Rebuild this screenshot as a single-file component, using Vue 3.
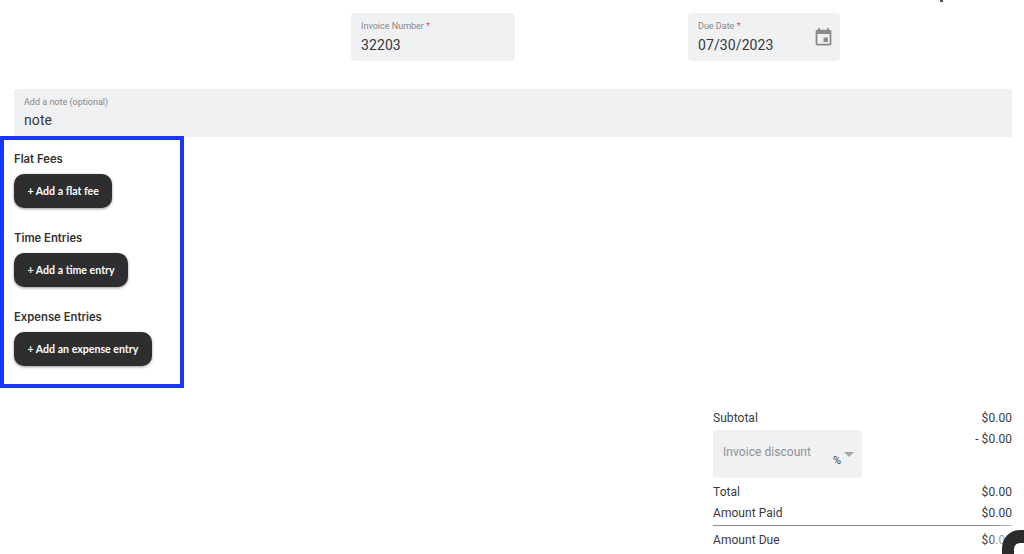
<script setup>
const sections = [
  { title: 'Flat Fees', action: '+ Add a flat fee' },
  { title: 'Time Entries', action: '+ Add a time entry' },
  { title: 'Expense Entries', action: '+ Add an expense entry' },
]
const totalsTop = [{ label: 'Total', value: '$0.00' }, { label: 'Amount Paid', value: '$0.00' }]
</script>

<template>
  <div class="page">
    <span class="clipped-mark"></span>
    <div class="top-row">
      <div class="field invoice">
        <div class="label">Invoice Number <span class="req">*</span></div>
        <div class="value">32203</div>
      </div>
      <div class="field due">
        <div>
          <div class="label">Due Date <span class="req">*</span></div>
          <div class="value">07/30/2023</div>
        </div>
        <svg class="cal" viewBox="0 0 24 24" width="21" height="21">
          <path fill="#8a8a8a" d="M17 12h-5v5h5v-5zM16 1v2H8V1H6v2H5c-1.11 0-1.99.9-1.99 2L3 19c0 1.1.89 2 2 2h14c1.1 0 2-.9 2-2V5c0-1.1-.9-2-2-2h-1V1h-2zm3 18H5V8h14v11z"/>
        </svg>
      </div>
    </div>

    <div class="field note">
      <div class="label">Add a note (optional)</div>
      <div class="value">note</div>
    </div>

    <div class="entries">
      <div v-for="s in sections" :key="s.title" class="section">
        <div class="section-title">{{ s.title }}</div>
        <button class="add-btn">{{ s.action }}</button>
      </div>
    </div>

    <div class="totals">
      <div class="row first"><span>Subtotal</span><span>$0.00</span></div>
      <div class="discount-row">
        <div class="discount">
          <span class="discount-label">Invoice discount</span>
          <span class="percent">%</span>
          <span class="caret"></span>
        </div>
        <span class="discount-value">- $0.00</span>
      </div>
      <div v-for="t in totalsTop" :key="t.label" class="row"><span>{{ t.label }}</span><span>{{ t.value }}</span></div>
      <div class="rule"></div>
      <div class="row"><span>Amount Due</span><span>$0.00</span></div>
    </div>

    <div class="chat"><span class="chat-inner"></span></div>
  </div>
</template>

<style>
html, body { margin: 0; overflow: hidden; background: #fff; }
</style>

<style scoped>
.page {
  position: relative;
  width: 1024px;
  height: 554px;
  overflow: hidden;
  box-sizing: border-box;
  font-family: Roboto, sans-serif;
  color: #3a3a3c;
  padding-top: 13px;
}
.clipped-mark {
  position: absolute;
  left: 940px;
  top: 0;
  width: 3px;
  height: 2px;
  background: #555;
}
.top-row {
  display: flex;
  padding-left: 351px;
  gap: 173px;
}
.field {
  box-sizing: border-box;
  background: #f0f1f3;
  border-radius: 4px;
  height: 48px;
  padding: 8px 10px 0;
}
.invoice { width: 164px; }
.due {
  width: 152px;
  display: flex;
  justify-content: space-between;
  padding-right: 6px;
}
.cal { margin-top: 6px; }
.note {
  width: 998px;
  margin: 28px 0 0 14px;
  border-radius: 3px 3px 0 0;
}
.label {
  font-size: 9px;
  line-height: 11px;
  color: #85878b;
}
.req { color: #e8467c; }
.value {
  margin-top: 4px;
  font-size: 14px;
  line-height: 18px;
  letter-spacing: 0.1px;
  color: #37383a;
}
.note .value { margin-top: 3px; }
.entries {
  box-sizing: border-box;
  width: 184px;
  height: 252px;
  margin-top: -1px;
  border: 4px solid #1a35f5;
  padding: 11px 0 0 10px;
  display: flex;
  flex-direction: column;
  gap: 22px;
}
.section { display: flex; flex-direction: column; align-items: flex-start; }
.section-title {
  font-family: Inter, sans-serif;
  font-size: 11.3px;
  line-height: 16px;
  font-weight: 600;
  color: #333;
}
.add-btn {
  margin-top: 7px;
  height: 34px;
  padding: 0 13.5px;
  border: 0;
  border-radius: 10px;
  background: #2e2e30;
  color: #fff;
  font-family: Lato, sans-serif;
  font-size: 10.6px;
  font-weight: 700;
  box-shadow: 0 1px 3px rgba(0, 0, 0, 0.4);
}
.totals {
  width: 299px;
  margin: 22px 0 0 713px;
  font-size: 12px;
  letter-spacing: 0.05px;
  color: #3a3a3c;
}
.row {
  display: flex;
  justify-content: space-between;
  height: 21px;
  line-height: 16px;
}
.row.first { height: 20px; }
.discount-row {
  display: flex;
  justify-content: space-between;
  height: 54px;
  line-height: 16px;
}
.discount-value { padding-top: 1px; }
.discount {
  position: relative;
  box-sizing: border-box;
  width: 149px;
  height: 48px;
  background: #f0f1f3;
  border-radius: 3px;
  padding: 14px 0 0 10px;
}
.discount-label { color: #8e9094; }
.percent {
  position: absolute;
  left: 120px;
  top: 23px;
  font-size: 11px;
}
.caret {
  position: absolute;
  left: 131px;
  top: 22px;
  border-left: 5px solid transparent;
  border-right: 5px solid transparent;
  border-top: 5px solid #a4a5a8;
}
.rule {
  height: 1px;
  background: #8c8c8c;
  margin: -1px 0 6px;
}
.chat {
  position: absolute;
  left: 1002px;
  top: 530px;
  width: 50px;
  height: 50px;
  border-radius: 18px;
  background: #2b2b2b;
  box-shadow: 0 0 14px 8px rgba(255, 255, 255, 0.7);
}
.chat-inner {
  position: absolute;
  left: 12px;
  top: 13px;
  width: 30px;
  height: 30px;
  border-radius: 6px;
  background: #fff;
}
</style>
